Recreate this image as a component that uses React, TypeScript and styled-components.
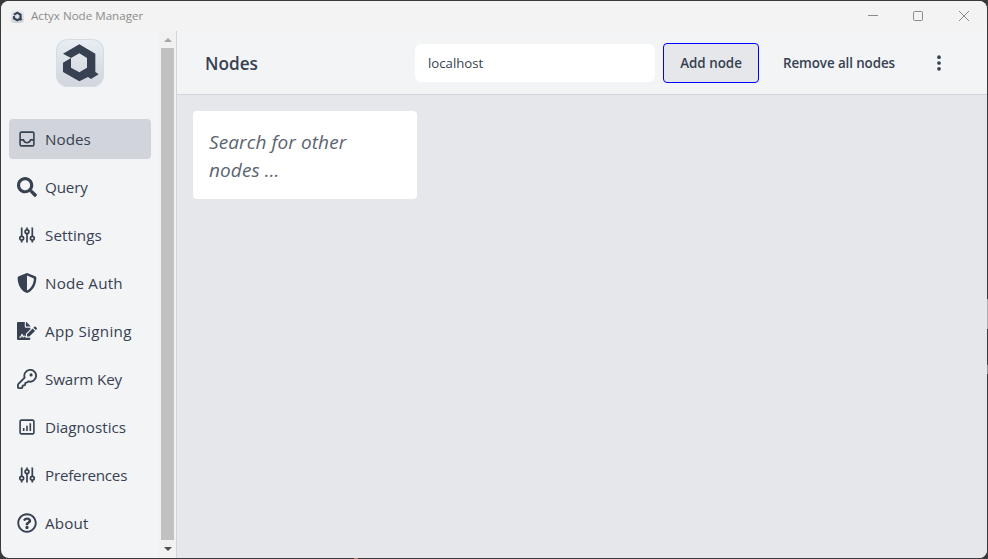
import React from "react";
import styled, { createGlobalStyle } from "styled-components";
import {
  FaSearch,
  FaShieldAlt,
  FaFileSignature,
  FaRegQuestionCircle,
} from "react-icons/fa";

const GlobalStyle = createGlobalStyle`
  *, *::before, *::after { box-sizing: border-box; }
  html, body, #root { height: 100%; margin: 0; }
  body { overflow: hidden; font-family: "Open Sans", "Noto Sans", sans-serif; color: #374151; }
`;

const Desktop = styled.div`
  width: 988px;
  height: 559px;
  padding: 1px;
  background:
    linear-gradient(#b08060, #b08060) 354px 558px / 4px 1px no-repeat,
    linear-gradient(#a9abae, #a9abae) 987px 299px / 1px 30px no-repeat,
    linear-gradient(#8f9194, #8f9194) 987px 365px / 1px 9px no-repeat,
    #39383b;
`;

const Window = styled.div`
  width: 986px;
  height: 557px;
  display: flex;
  flex-direction: column;
  overflow: hidden;
  border-radius: 8px;
  background: #f3f4f6;
`;

const TitleBar = styled.div`
  height: 30px;
  flex: none;
  display: flex;
  align-items: center;
  background: #f3f3f3;
  padding-left: 10px;
`;

const Title = styled.div`
  flex: 1;
  margin-left: 7px;
  font-size: 11.6px;
  line-height: 16px;
  color: #8c8c8c;
`;

const WindowControls = styled.div`
  display: flex;
  height: 30px;
`;

const ControlButton = styled.div`
  width: 46px;
  display: flex;
  align-items: center;
  justify-content: center;
  color: #8b8b8b;
  svg { display: block; }
`;

const Body = styled.div`
  flex: 1;
  min-height: 0;
  display: flex;
`;

const Sidebar = styled.aside`
  width: 158px;
  padding: 8px 8px 0;
  display: flex;
  flex-direction: column;
`;

const LogoRow = styled.div`
  display: flex;
  justify-content: center;
  height: 80px;
`;

const LogoTile = styled.div<{ $size: number }>`
  width: ${(p) => p.$size}px;
  height: ${(p) => p.$size}px;
  flex: none;
  border-radius: ${(p) => p.$size / 4}px;
  background: linear-gradient(#e8eef3, #d0d5dd);
  box-shadow: inset 0 0 0 ${(p) => (p.$size > 20 ? 1 : 0)}px #d6dce1;
  svg { display: block; }
`;

const Nav = styled.nav`
  display: flex;
  flex-direction: column;
  gap: 8px;
`;

const NavItem = styled.div<{ $active?: boolean }>`
  height: 40px;
  display: flex;
  align-items: center;
  gap: 8px;
  padding: 0 8px;
  border-radius: 4px;
  background: ${(p) => (p.$active ? "#d1d5db" : "transparent")};
  svg { flex: none; display: block; }
`;

const NavLabel = styled.span<{ $spacing: number }>`
  font-size: 15.2px;
  line-height: 24px;
  white-space: nowrap;
  letter-spacing: ${(p) => p.$spacing}px;
`;

const ScrollBar = styled.div`
  width: 17px;
  flex: none;
  display: flex;
  flex-direction: column;
  align-items: center;
  background: #f1f1f1;
`;

const ScrollArrow = styled.div<{ $color: string; $height: number }>`
  height: ${(p) => p.$height}px;
  display: flex;
  align-items: center;
  color: ${(p) => p.$color};
`;

const ScrollThumb = styled.div`
  width: 13px;
  flex: 1;
  background: #c1c1c1;
`;

const Content = styled.div`
  flex: 1;
  display: flex;
  flex-direction: column;
  border-left: 1px solid #d1d5db;
`;

const Header = styled.header`
  height: 64px;
  flex: none;
  display: flex;
  align-items: center;
  border-bottom: 1px solid #d1d5db;
  padding: 0 32px 0 28px;
`;

const Heading = styled.h1`
  margin: 0;
  padding-top: 2px;
  width: 210px;
  font-size: 17.2px;
  line-height: 28px;
  font-weight: 600;
`;

const AddressField = styled.div`
  width: 240px;
  height: 38px;
  padding: 0 13px;
  border-radius: 6px;
  background: #fff;
  font-size: 13.2px;
  line-height: 38px;
`;

const Button = styled.div<{ $focused?: boolean }>`
  height: 40px;
  width: ${(p) => (p.$focused ? 96 : 144)}px;
  margin-left: 8px;
  display: flex;
  align-items: center;
  justify-content: center;
  border-radius: 4px;
  border: 1px solid ${(p) => (p.$focused ? "#0000ff" : "transparent")};
  background: ${(p) => (p.$focused ? "#e5e7eb" : "transparent")};
  font-size: 13.4px;
  font-weight: 600;
  letter-spacing: ${(p) => (p.$focused ? 0 : -0.1)}px;
  white-space: nowrap;
`;

const MoreButton = styled.div`
  width: 32px;
  height: 40px;
  margin-left: 12px;
  display: flex;
  align-items: center;
  justify-content: center;
`;

const Main = styled.main`
  flex: 1;
  padding: 16px;
  background: #e5e7eb;
`;

const Card = styled.div`
  width: 224px;
  height: 88px;
  padding: 17px 16px 15px;
  border-radius: 4px;
  background: #fff;
  color: #5b6470;
  font-size: 19px;
  font-style: italic;
  line-height: 28px;
  letter-spacing: 0.1px;
`;

const Logo = ({ size }: { size: number }) => (
  <LogoTile $size={size}>
    <svg width={size} height={size} viewBox="0 0 144 144">
      <path
        fill="#374151"
        fillRule="evenodd"
        d="M70 16 118 44V99L128 105.500 105 120 96 114 70 127 21 99V71L45 57 21 44ZM70 43 45 57V86L70 100 93 86V57Z"
      />
    </svg>
  </LogoTile>
);

const InboxIcon = () => (
  <svg width="20" height="20" viewBox="0 0 20 20" fill="none" stroke="currentColor" strokeWidth="1.6">
    <rect x="3.100" y="3.100" width="13.800" height="13.800" rx="1.400" />
    <path d="M3 10.900H6.400Q7.500 13.700 10 13.700T13.600 10.900H17" />
  </svg>
);

const SlidersIcon = () => (
  <svg width="20" height="20" viewBox="0 0 20 20" fill="none" stroke="currentColor" strokeWidth="1.7">
    <circle cx="4.700" cy="13.300" r="1.900" />
    <circle cx="10" cy="6.700" r="1.900" />
    <circle cx="15.300" cy="13.300" r="1.900" />
    <path d="M4.700 2.500V11.400M4.700 15.200V17.500M10 2.500V4.800M10 8.600V17.500M15.300 2.500V11.400M15.300 15.200V17.500" />
  </svg>
);

const KeyIcon = () => (
  <svg width="20" height="20" viewBox="1 1 22 22" fill="none" stroke="currentColor" strokeWidth="2" strokeLinejoin="round">
    <path d="M2.586 17.414A2 2 0 0 0 2 18.828V21a1 1 0 0 0 1 1h3a1 1 0 0 0 1-1v-1a1 1 0 0 1 1-1h1a1 1 0 0 0 1-1v-1a1 1 0 0 1 1-1h.172a2 2 0 0 0 1.414-.586l.814-.814a6.500 6.500 0 1 0-4-4z" />
    <circle cx="16.500" cy="7.500" r="1.700" fill="currentColor" stroke="none" />
  </svg>
);

const ChartIcon = () => (
  <svg width="20" height="20" viewBox="0 0 20 20" fill="none" stroke="currentColor" strokeWidth="1.6">
    <rect x="3.100" y="3.100" width="13.800" height="13.800" rx="1.400" />
    <path d="M6.700 13.900V10.900M10 13.900V8.700M13.300 13.900V6.200" />
  </svg>
);

const items = [
  { label: "Nodes", icon: <InboxIcon />, spacing: 0.05 },
  { label: "Query", icon: <FaSearch size={20} />, spacing: -0.15 },
  { label: "Settings", icon: <SlidersIcon />, spacing: 0.05 },
  { label: "Node Auth", icon: <FaShieldAlt size={20} />, spacing: 0.2 },
  { label: "App Signing", icon: <FaFileSignature size={20} />, spacing: 0.32 },
  { label: "Swarm Key", icon: <KeyIcon />, spacing: -0.12 },
  { label: "Diagnostics", icon: <ChartIcon />, spacing: 0 },
  { label: "Preferences", icon: <SlidersIcon />, spacing: -0.22 },
  { label: "About", icon: <FaRegQuestionCircle size={20} />, spacing: 0.15 },
];

export default function App() {
  return (
    <Desktop>
      <GlobalStyle />
      <Window>
        <TitleBar>
          <Logo size={13} />
          <Title>Actyx Node Manager</Title>
          <WindowControls>
            <ControlButton>
              <svg width="12" height="10"><path d="M2 4.500H12" stroke="currentColor" /></svg>
            </ControlButton>
            <ControlButton>
              <svg width="10" height="10"><rect x=".5" y=".5" width="9" height="9" rx="1" fill="none" stroke="currentColor" /></svg>
            </ControlButton>
            <ControlButton>
              <svg width="10" height="10"><path d="M0 0 10 10M10 0 0 10" stroke="currentColor" /></svg>
            </ControlButton>
          </WindowControls>
        </TitleBar>
        <Body>
          <Sidebar>
            <LogoRow><Logo size={48} /></LogoRow>
            <Nav>
              {items.map((item, i) => (
                <NavItem key={item.label} $active={i === 0}>
                  {item.icon}
                  <NavLabel $spacing={item.spacing}>{item.label}</NavLabel>
                </NavItem>
              ))}
            </Nav>
          </Sidebar>
          <ScrollBar>
            <ScrollArrow $color="#a3a3a3" $height={17}>
              <svg width="8" height="4"><path d="M0 4 4 0 8 4Z" fill="currentColor" /></svg>
            </ScrollArrow>
            <ScrollThumb />
            <ScrollArrow $color="#505050" $height={18}>
              <svg width="8" height="4"><path d="M0 0 4 4 8 0Z" fill="currentColor" /></svg>
            </ScrollArrow>
          </ScrollBar>
          <Content>
            <Header>
              <Heading>Nodes</Heading>
              <AddressField>localhost</AddressField>
              <Button $focused>Add node</Button>
              <Button>Remove all nodes</Button>
              <MoreButton>
                <svg width="6" height="16" fill="currentColor">
                  <circle cx="3" cy="2.200" r="1.850" /><circle cx="3" cy="8" r="1.850" /><circle cx="3" cy="13.800" r="1.850" />
                </svg>
              </MoreButton>
            </Header>
            <Main>
              <Card>Search for other nodes ...</Card>
            </Main>
          </Content>
        </Body>
      </Window>
    </Desktop>
  );
}
